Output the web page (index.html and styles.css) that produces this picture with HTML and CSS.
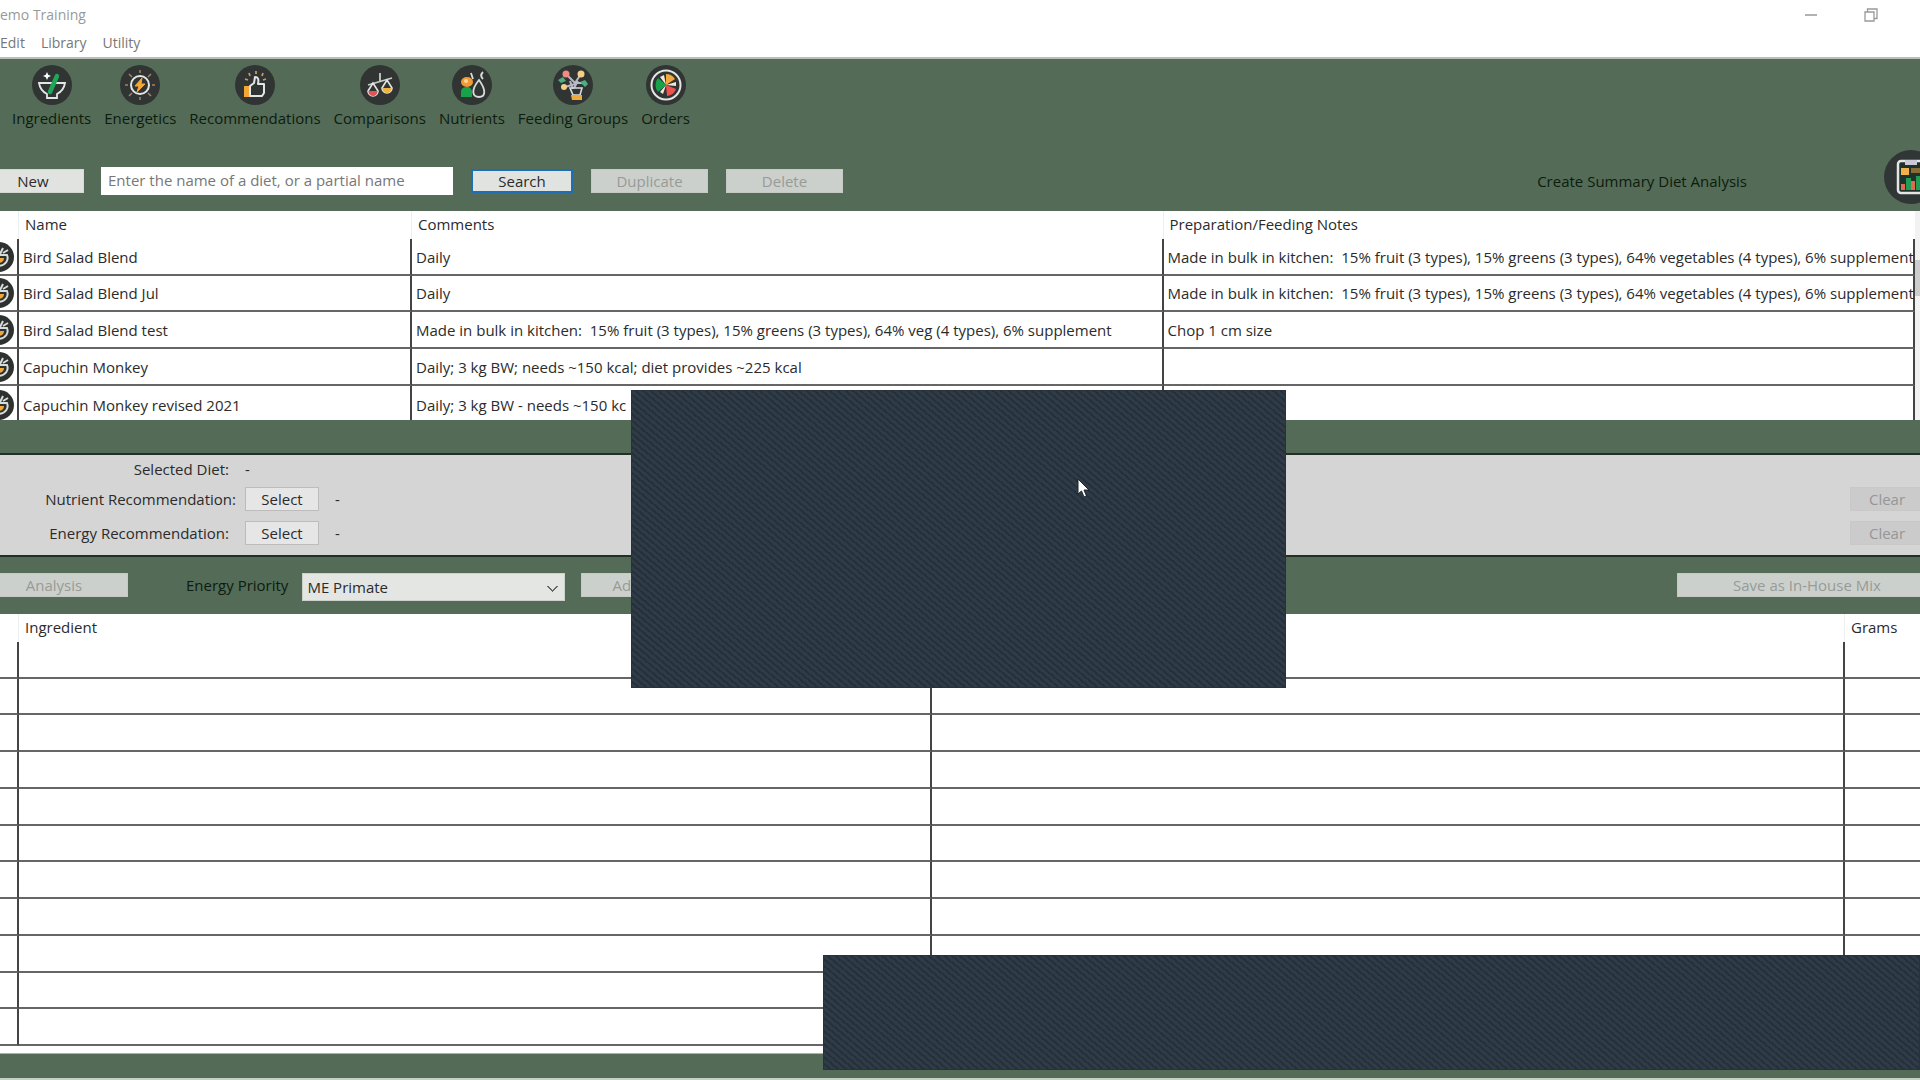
FILE: index.html
```
<!DOCTYPE html>
<html lang="en">
<head>
<meta charset="utf-8">
<title>Demo Training</title>
<link rel="stylesheet" href="styles.css">
</head>
<body>
<svg class="defs" aria-hidden="true">
  <symbol id="diet" viewBox="0 0 30 30">
    <circle cx="15" cy="15" r="15" fill="#2d3130"/>
    <path d="M15 13h8c2 5-1 10-8 11" fill="none" stroke="#d8dcdb" stroke-width="2"/>
    <path d="M14 16h6c0 3-2 5-6 5z" fill="#f0a63a"/>
    <path d="M16 12l3-6M19 11l5-3" stroke="#d8dcdb" stroke-width="2"/>
  </symbol>
</svg>
<div class="app">
  <header class="titlebar">
    <span class="title">emo Training</span>
    <div class="window-controls">
      <button type="button" aria-label="Minimize"><svg width="14" height="14" viewBox="0 0 14 14"><path d="M1 7h12" stroke="#999" stroke-width="1.500"/></svg></button>
      <button type="button" aria-label="Restore"><svg width="14" height="14" viewBox="0 0 14 14" fill="none" stroke="#999" stroke-width="1.300"><path d="M1 4h9v9H1zM3.500 4V1H13v9.500h-3"/></svg></button>
    </div>
  </header>
  <nav class="menubar">
    <a href="#">Edit</a><a href="#">Library</a><a href="#">Utility</a>
  </nav>

  <nav class="toolbar">
    <a href="#"><svg viewBox="0 0 40 40"><circle cx="20" cy="20" r="20" fill="#303433"/><path d="M7 18h26c-1 6-4 9-8 11v4H15v-4c-4-2-7-5-8-11z" fill="none" stroke="#e4e6e5" stroke-width="1.800"/><path d="M18 27l7-16" stroke="#1fa757" stroke-width="4.500" stroke-linecap="round"/><path d="M15 7l1.200 2.800L19 11l-2.800 1.200L15 15l-1.200-2.800L11 11l2.800-1.200z" fill="#fff"/></svg>Ingredients</a>
    <a href="#"><svg viewBox="0 0 40 40"><circle cx="20" cy="20" r="20" fill="#303433"/><circle cx="20" cy="20" r="9" fill="none" stroke="#e4e6e5" stroke-width="2"/><path d="M22 13l-7 8h4l-2 6 8-8h-4z" fill="#f6a632" stroke="#f6a632"/><path d="M20 5v3M20 32v3M5 20h3M32 20h3M9 9l3 3M28 28l3 3M9 31l3-3M28 12l3-3" stroke="#a5836c" stroke-width="1.500"/></svg>Energetics</a>
    <a href="#"><svg viewBox="0 0 40 40"><circle cx="20" cy="20" r="20" fill="#303433"/><path d="M9 21h6v11H9z" fill="#f6a632"/><path d="M15 21l4-3 1-6c3 0 4 2 3 7h6v9l-2 3H15z" fill="none" stroke="#e4e6e5" stroke-width="2" stroke-linejoin="round"/><path d="M21 6v3M14 8l1 3M28 8l-1 3M10 14l3 1M31 14l-3 1" stroke="#c99a5b" stroke-width="1.800"/></svg>Recommendations</a>
    <a href="#"><svg viewBox="0 0 40 40"><circle cx="20" cy="20" r="20" fill="#303433"/><path d="M8 20l24-7M20 8v8" stroke="#c8cccb" stroke-width="1.800"/><path d="M13 18l-5 8a5 5 0 0 0 10 0zM27 15l-5 8a5 5 0 0 0 10 0z" fill="none" stroke="#e4e6e5" stroke-width="1.600"/><path d="M8.500 26h9a4.500 4.500 0 0 1-9 1z" fill="#e55353"/><path d="M22.500 23h9a4.500 4.500 0 0 1-9 1z" fill="#f0b43c"/></svg>Comparisons</a>
    <a href="#"><svg viewBox="0 0 40 40"><circle cx="20" cy="20" r="20" fill="#303433"/><ellipse cx="15" cy="17" rx="6" ry="5" fill="#f39a35"/><circle cx="14" cy="16" r="2" fill="#ffd7a0"/><path d="M9 32v-5c0-4 3-5 6-5s5 2 5 5v5z" fill="#16a34a"/><path d="M27 15c-9 11-6 17 0 17s8-6 0-17zM19 8l2 6M31 7c-3 3-2 5 0 7" fill="none" stroke="#d8dcdb" stroke-width="1.800"/></svg>Nutrients</a>
    <a href="#"><svg viewBox="0 0 40 40"><circle cx="20" cy="20" r="20" fill="#303433"/><path d="M13 9l9 9M28 9l-6 9M12 22l10-3M30 18h-9M17 16l3 8M25 16l-4 7" stroke="#b9b8c9" stroke-width="2"/><path d="M17 23h12l-2 7h-7z" fill="none" stroke="#d8dcdb" stroke-width="1.600"/><circle cx="13" cy="9" r="3.500" fill="#ef8b83"/><circle cx="28" cy="9" r="3.500" fill="#f4cf86"/><circle cx="11" cy="22" r="3" fill="#f4cf86"/><path d="M5 15l5-3 3 4-5 2zM27 17l5-2 3 4-3 3z" fill="#4caf80"/><path d="M18 30h11v5H19z" fill="#f2a93b"/></svg>Feeding Groups</a>
    <a href="#"><svg viewBox="0 0 40 40"><circle cx="20" cy="20" r="20" fill="#303433"/><circle cx="20" cy="20" r="14.500" fill="none" stroke="#e4e6e5" stroke-width="2"/><path d="M20 20V9a11 11 0 0 1 9 5z" fill="#f2a93b"/><path d="M20 20l10 4a11 11 0 0 1-9 7z" fill="#ef5350"/><path d="M20 20l-8 7a11 11 0 0 1 0-14z" fill="#16a34a"/><path d="M20 20l-6-8 4-2zM20 20l10-3v4zM20 20l-3 9-3-2z" fill="#f1e7db"/></svg>Orders</a>
  </nav>

  <form class="searchbar">
    <button type="button" class="btn new">New</button>
    <input type="text" class="search-input" aria-label="Diet name" placeholder="Enter the name of a diet, or a partial name">
    <button type="button" class="btn search">Search</button>
    <button type="button" class="btn wide" disabled>Duplicate</button>
    <button type="button" class="btn wide" disabled>Delete</button>
    <label class="summary-label" for="summary">Create Summary Diet Analysis</label>
    <button type="button" id="summary" class="summary" aria-label="Create Summary Diet Analysis"><svg viewBox="0 0 54 54"><circle cx="27" cy="27" r="27" fill="#303635"/><rect x="14" y="11" width="30" height="32" rx="3" fill="#20302a" stroke="#e4e6e5" stroke-width="2.500"/><path d="M21 10h12v5H21z" fill="#c9c9d8"/><path d="M17 18h8v7h-8z" fill="#f2b04a"/><path d="M27 18h12v5H27z" fill="#8a6b35"/><path d="M17 34h4v6h-4zM27 31h4v9h-4z" fill="#e0694f"/><path d="M22 28h5v12h-5zM32 26h5v14h-5z" fill="#1f9d55"/></svg></button>
  </form>

  <div class="diets">
    <table class="grid">
      <colgroup><col class="c-icon"><col class="c-name"><col><col></colgroup>
      <thead><tr><th></th><th>Name</th><th>Comments</th><th>Preparation/Feeding Notes</th></tr></thead>
      <tbody>
        <tr><td class="ico"><svg><use href="#diet"/></svg></td><td>Bird Salad Blend</td><td>Daily</td><td>Made in bulk in kitchen:&nbsp; 15% fruit (3 types), 15% greens (3 types), 64% vegetables (4 types), 6% supplement</td></tr>
        <tr><td class="ico"><svg><use href="#diet"/></svg></td><td>Bird Salad Blend Jul</td><td>Daily</td><td>Made in bulk in kitchen:&nbsp; 15% fruit (3 types), 15% greens (3 types), 64% vegetables (4 types), 6% supplement</td></tr>
        <tr><td class="ico"><svg><use href="#diet"/></svg></td><td>Bird Salad Blend test</td><td>Made in bulk in kitchen:&nbsp; 15% fruit (3 types), 15% greens (3 types), 64% veg (4 types), 6% supplement</td><td>Chop 1 cm size</td></tr>
        <tr><td class="ico"><svg><use href="#diet"/></svg></td><td>Capuchin Monkey</td><td>Daily; 3 kg BW; needs ~150 kcal; diet provides ~225 kcal</td><td></td></tr>
        <tr><td class="ico"><svg><use href="#diet"/></svg></td><td>Capuchin Monkey revised 2021</td><td>Daily; 3 kg BW - needs ~150 kc</td><td></td></tr>
      </tbody>
    </table>
    <div class="scroll"><div class="thumb"></div></div>
  </div>

  <section class="selected">
    <div class="row"><span class="name">Selected Diet:</span><span>-</span></div>
    <div class="row"><span class="name far">Nutrient Recommendation:</span><button type="button" class="btn small">Select</button><span>-</span><button type="button" class="btn small clear" disabled>Clear</button></div>
    <div class="row"><span class="name">Energy Recommendation:</span><button type="button" class="btn small">Select</button><span>-</span><button type="button" class="btn small clear" disabled>Clear</button></div>
  </section>

  <div class="actions">
    <button type="button" class="btn analysis" disabled>Analysis</button>
    <label for="priority">Energy Priority</label>
    <select id="priority"><option>ME Primate</option></select>
    <button type="button" class="btn add" disabled>Add</button>
    <button type="button" class="btn save" disabled>Save as In-House Mix</button>
  </div>

  <div class="ingredients">
    <table class="grid">
      <colgroup><col class="c-icon"><col><col><col class="c-grams"></colgroup>
      <thead><tr><th></th><th>Ingredient</th><th></th><th>Grams</th></tr></thead>
      <tbody>
        <tr><td></td><td></td><td></td><td></td></tr>
        <tr><td></td><td></td><td></td><td></td></tr>
        <tr><td></td><td></td><td></td><td></td></tr>
        <tr><td></td><td></td><td></td><td></td></tr>
        <tr><td></td><td></td><td></td><td></td></tr>
        <tr><td></td><td></td><td></td><td></td></tr>
        <tr><td></td><td></td><td></td><td></td></tr>
        <tr><td></td><td></td><td></td><td></td></tr>
        <tr><td></td><td></td><td></td><td></td></tr>
        <tr><td></td><td></td><td></td><td></td></tr>
        <tr><td></td><td></td><td></td><td></td></tr>
      </tbody>
    </table>
  </div>
  <footer class="footer"></footer>

  <div class="cover dialog"></div>
  <div class="cover notice"></div>
  <svg class="pointer" width="13" height="20" viewBox="0 0 13 20"><path d="M1 1v15l3.500-3 2.500 6 2.500-1-2.500-6h5z" fill="#fff" stroke="#1d2630"/></svg>
</div>
</body>
</html>
```
FILE: styles.css
```
* { box-sizing: border-box; }

body {
  margin: 0;
  background: #fff;
  color: #2b2b2b;
  font: 15px/20px "Open Sans", "Noto Sans", sans-serif;
}

button, input, select { font: inherit; color: inherit; }
a { color: inherit; text-decoration: none; }
.defs { display: none; }

.app {
  position: relative;
  display: flex;
  flex-direction: column;
  min-height: 100vh;
  overflow: hidden;
}

/* Title and menu */
.titlebar {
  display: flex;
  justify-content: space-between;
  height: 32px;
  padding: 5px 42px 6px 0;
  color: #999;
  font-size: 14px;
}
.window-controls { display: flex; gap: 46px; }
.window-controls button {
  display: flex;
  padding: 3px 0;
  border: 0;
  background: none;
}
.menubar {
  display: flex;
  gap: 16px;
  height: 27px;
  padding-top: 1px;
  border-bottom: 2px solid #b9beb9;
  color: #777;
  font-size: 14px;
}

/* Icon toolbar */
.toolbar {
  display: flex;
  gap: 13px;
  height: 91px;
  padding: 6px 12px;
  background: #546b57;
  color: #0c1c0e;
}
.toolbar a {
  display: flex;
  flex-direction: column;
  align-items: center;
  gap: 3px;
}
.toolbar svg { width: 40px; height: 40px; }

.btn {
  height: 24px;
  padding: 0;
  border: 1px solid #d5d9d5;
  background: #e0e3e0;
  line-height: 20px;
  text-align: center;
}
.btn:disabled { border-color: #c5cac5; background: #ccd0cc; color: #979b97; }

.searchbar {
  display: flex;
  align-items: center;
  gap: 18px;
  height: 61px;
  background: #546b57;
}
.new { width: 102px; margin-left: -18px; }
.search-input {
  width: 352px;
  height: 28px;
  margin-left: -1px;
  padding: 0 7px 2px;
  border: 0;
  background: #fff;
}
.search-input::placeholder { color: #777; opacity: 1; }
.search { width: 102px; border: 2px solid #1c6fb5; line-height: 18px; }
.wide { width: 117px; }
.summary-label { margin-left: auto; color: #0c1c0e; }
.summary {
  width: 54px;
  height: 54px;
  margin: -8px -18px 0 119px;
  padding: 0;
  border: 0;
  background: none;
}
.summary svg { display: block; }

/* Ruled tables */
.grid {
  flex: 1;
  width: 100%;
  border-spacing: 0;
  table-layout: fixed;
}
.c-icon { width: 19px; }
.c-name { width: 393px; }
.c-grams { width: 75px; }
.grid th {
  height: 28px;
  padding: 0 6px 2px;
  border-right: 1px solid #eee;
  font-weight: 400;
  text-align: left;
}
.grid td {
  height: 37px;
  padding: 0 4px;
  border-right: 2px solid #444;
  border-bottom: 2px solid #666;
  white-space: nowrap;
}
.grid tr:nth-child(4n + 2) td { height: 36px; }
.grid tr > :last-child { border-right: 0; }

.diets {
  display: flex;
  height: 209px;
  margin-bottom: 33px;
  overflow: hidden;
  background: #fff;
}
.diets tbody tr:last-child td { border-bottom: 0; }
.grid .ico { padding: 0; }
.ico svg { display: block; width: 30px; height: 30px; margin-left: -16px; }
.diets td:last-child { padding: 0 4px; }
.diets tbody tr > td:last-child { border-right: 2px solid #444; }
.scroll { width: 5px; padding-top: 49px; background: #f2f2f2; }
.thumb { height: 36px; background: #cdcdcd; }

/* Selected diet */
.selected {
  padding: 5px 0;
  border-top: 2px solid #243026;
  border-bottom: 2px solid #243026;
  background: #d5d5d5;
  box-shadow: 0 -33px #546b57;
}
.row { display: flex; align-items: center; gap: 16px; height: 34px; }
.row:first-child { height: 18px; margin-bottom: 4px; }
.name { width: 229px; text-align: right; }
.far { width: 236px; margin-right: -7px; }
.small { width: 74px; border-color: #bcbcbc; background: #e6e6e6; }
.small:disabled { border-color: #c8c8c8; background: #cbcbcb; color: #969696; }
.clear { margin: 0 -4px 0 auto; }

/* Actions */
.actions {
  display: flex;
  align-items: flex-start;
  gap: 16px;
  height: 57px;
  padding-top: 16px;
  background: #546b57;
}
.actions label { margin: 2px -2px 0 42px; color: #0c1c0e; }
.analysis { width: 148px; margin-left: -20px; }
.actions select {
  appearance: none;
  width: 263px;
  height: 28px;
  padding: 0 4px;
  border: 1px solid #ccd1cc;
  border-radius: 0;
  background:
    linear-gradient(45deg, transparent 46%, #666 46% 60%, transparent 60%) right 11px top 12px / 6px 6px no-repeat,
    linear-gradient(-45deg, transparent 46%, #666 46% 60%, transparent 60%) right 6px top 12px / 6px 6px no-repeat,
    #e3e6e3;
}
.add { width: 90px; }
.save { width: 260px; margin: 0 -17px 0 auto; }

.ingredients { display: flex; flex: 1; align-items: flex-start; background: #fff; }
.footer { height: 27px; border-top: 1px solid #a9b5aa; border-bottom: 2px solid #c3d0c4; background: #546b57; }

/* Hatched panels above the window */
.cover {
  position: absolute;
  border: 1px solid #28323c;
  background: repeating-linear-gradient(40deg, #2f3c48 0 3px, #25303a 3px 5px);
}
.dialog { top: 390px; left: 631px; width: 655px; height: 298px; }
.notice { right: 0; bottom: 10px; left: 823px; height: 115px; }
.pointer { position: absolute; top: 478px; left: 1077px; }
```
